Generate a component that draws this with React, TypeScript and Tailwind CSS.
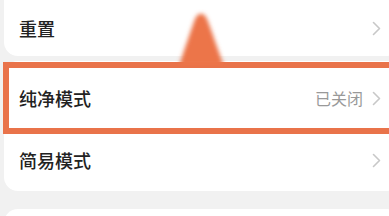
import React from 'react';

const font = { fontFamily: '"Noto Sans CJK SC", "Noto Sans", sans-serif' };

const Chevron: React.FC = () => (
  <svg width="9" height="15" viewBox="0 0 9 15" className="shrink-0">
    <path d="M1.5 1.5 L7.5 7.5 L1.5 13.5" fill="none" stroke="#c8c8c8" strokeWidth="1.6" strokeLinecap="round" strokeLinejoin="round" />
  </svg>
);

interface RowProps {
  label: string;
  value?: string;
  h: string;
}

const Row: React.FC<RowProps> = ({ label, value, h }) => (
  <div className={`flex items-center justify-between pl-[15px] pr-[8px] ${h}`}>
    <span className="text-[18px] text-[#222] font-medium">{label}</span>
    <div className="flex items-center gap-[9px]">
      {value && <span className="text-[16px] text-[#999]">{value}</span>}
      <Chevron />
    </div>
  </div>
);

export default function App() {
  return (
    <div className="relative h-[216px] w-[389px] overflow-hidden bg-[#f1f1f1]" style={font}>
      <div className="flex flex-col gap-[5px] pl-[4px] -mr-[12px]">
        <div className="bg-white rounded-b-[14px] pr-[12px]">
          <Row label="重置" h="h-[56px]" />
        </div>
        <div className="bg-white rounded-[14px] pt-[5px] pr-[12px]">
          <Row label="纯净模式" value="已关闭" h="h-[64px]" />
          <Row label="简易模式" h="h-[61px]" />
        </div>
        <div className="bg-white rounded-t-[14px] h-[40px] mt-[13px]" />
      </div>

      {/* orange highlight annotation */}
      <div className="absolute left-[3px] top-[62px] h-[72px] w-[400px] border-[6px] border-[#e9734a] blur-[0.6px]" />
      <svg className="absolute left-[172px] top-[8px]" width="58" height="58" viewBox="0 0 58 58">
        <defs>
          <filter id="b" x="-20%" y="-20%" width="140%" height="140%">
            <feGaussianBlur stdDeviation="2" />
          </filter>
        </defs>
        <path d="M7 58 C13 40 19 22 23 11 C26 4 32 4 35 11 C40 24 46 42 52 58 Z" fill="#ec7448" filter="url(#b)" />
      </svg>
    </div>
  );
}
